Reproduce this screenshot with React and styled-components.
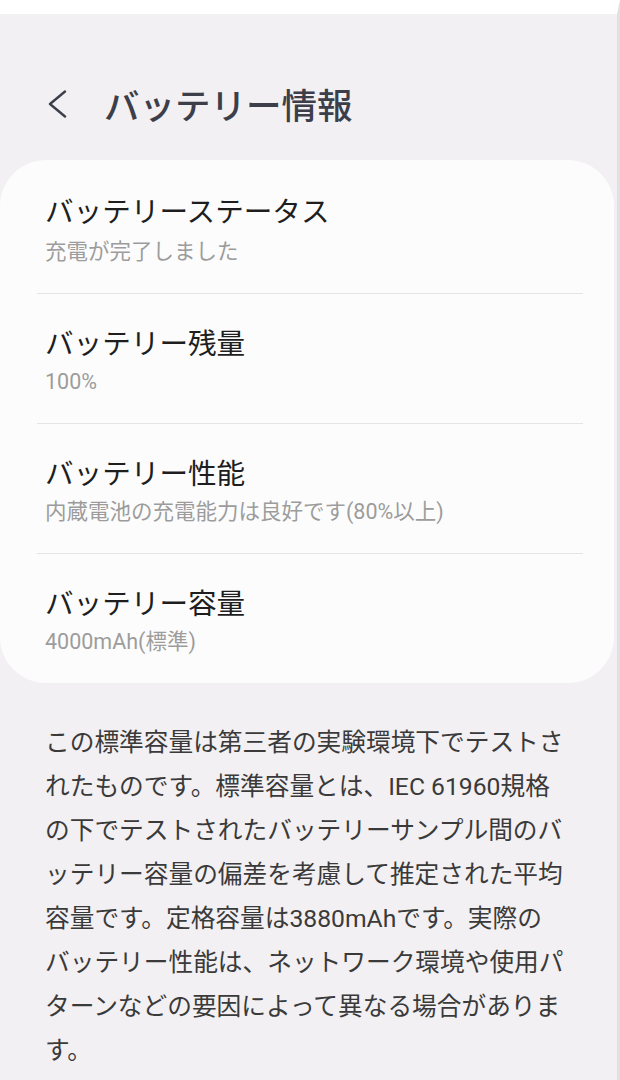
import React from 'react'
import styled, { createGlobalStyle } from 'styled-components'

const GlobalStyle = createGlobalStyle`
  html, body {
    margin: 0;
    padding: 0;
    background: #f2f0f2;
  }
  body {
    font-family: Roboto, "Noto Sans CJK JP", "Noto Sans", sans-serif;
    -webkit-font-smoothing: antialiased;
  }
`

// styles
const Page = styled.div`
  width: 620px;
  min-height: 1080px;
  box-sizing: border-box;
  background: #f2f0f2;
  border-right: 3px solid #e2e0e2;
  border-top: 14px solid #ffffff;
`

const Header = styled.header`
  display: flex;
  align-items: center;
  height: 76px;
  padding: 52px 0 0 47px;
  margin-bottom: 18px;
  gap: 19px;
`

const BackButton = styled.button`
  display: flex;
  align-items: center;
  justify-content: flex-start;
  width: 38px;
  height: 38px;
  padding: 0;
  border: none;
  background: transparent;
  cursor: pointer;
`

const Title = styled.h1`
  margin: 0;
  font-family: "Noto Sans CJK JP", sans-serif;
  font-size: 35.5px;
  font-weight: 500;
  color: #3c3f4a;
  line-height: 1;
`

const Card = styled.section`
  width: 614px;
  background: #fcfcfc;
  border-radius: 46px;
  overflow: hidden;
`

const Row = styled.div`
  display: flex;
  flex-direction: column;
  gap: ${p => (p.first ? '6px' : '4px')};
  margin: 0 31px 0 37px;
  padding: ${p => (p.first ? '33px' : '31px')} 0 26px 8px;
  border-bottom: ${p => (p.last ? 'none' : '1px solid #e4e4e4')};
`

const RowTitle = styled.div`
  font-size: 28.6px;
  line-height: 38px;
  color: #1e1e1e;
`

const RowSub = styled.div`
  font-size: 21.5px;
  line-height: 30px;
  color: #9c9c9c;
`

const Note = styled.p`
  margin: 38px 0 0 45px;
  font-size: 24.7px;
  line-height: 44px;
  color: #3a3a3a;
  white-space: nowrap;
`

const items = [
  { title: 'バッテリーステータス', sub: '充電が完了しました' },
  { title: 'バッテリー残量', sub: '100%' },
  { title: 'バッテリー性能', sub: '内蔵電池の充電能力は良好です(80%以上)' },
  { title: 'バッテリー容量', sub: '4000mAh(標準)' },
]

const noteLines = [
  'この標準容量は第三者の実験環境下でテストさ',
  'れたものです。標準容量とは、IEC 61960規格',
  'の下でテストされたバッテリーサンプル間のバ',
  'ッテリー容量の偏差を考慮して推定された平均',
  '容量です。定格容量は3880mAhです。実際の',
  'バッテリー性能は、ネットワーク環境や使用パ',
  'ターンなどの要因によって異なる場合がありま',
  'す。',
]

const App = () => {
  return (
    <Page>
      <GlobalStyle />
      <Header>
        <BackButton aria-label='戻る'>
          <svg width='20' height='28' viewBox='0 0 20 28'>
            <polyline points='18,1.5 3,14 18,26.5' fill='none' stroke='#3c3f4a' strokeWidth='2.4' strokeLinecap='round' strokeLinejoin='round' />
          </svg>
        </BackButton>
        <Title>バッテリー情報</Title>
      </Header>
      <Card>
        {items.map((item, i) => (
          <Row key={item.title} first={i === 0} last={i === items.length - 1}>
            <RowTitle>{item.title}</RowTitle>
            <RowSub>{item.sub}</RowSub>
          </Row>
        ))}
      </Card>
      <Note>
        {noteLines.map((line, i) => (
          <React.Fragment key={i}>
            {line}
            {i < noteLines.length - 1 && <br />}
          </React.Fragment>
        ))}
      </Note>
    </Page>
  )
}

export default App
